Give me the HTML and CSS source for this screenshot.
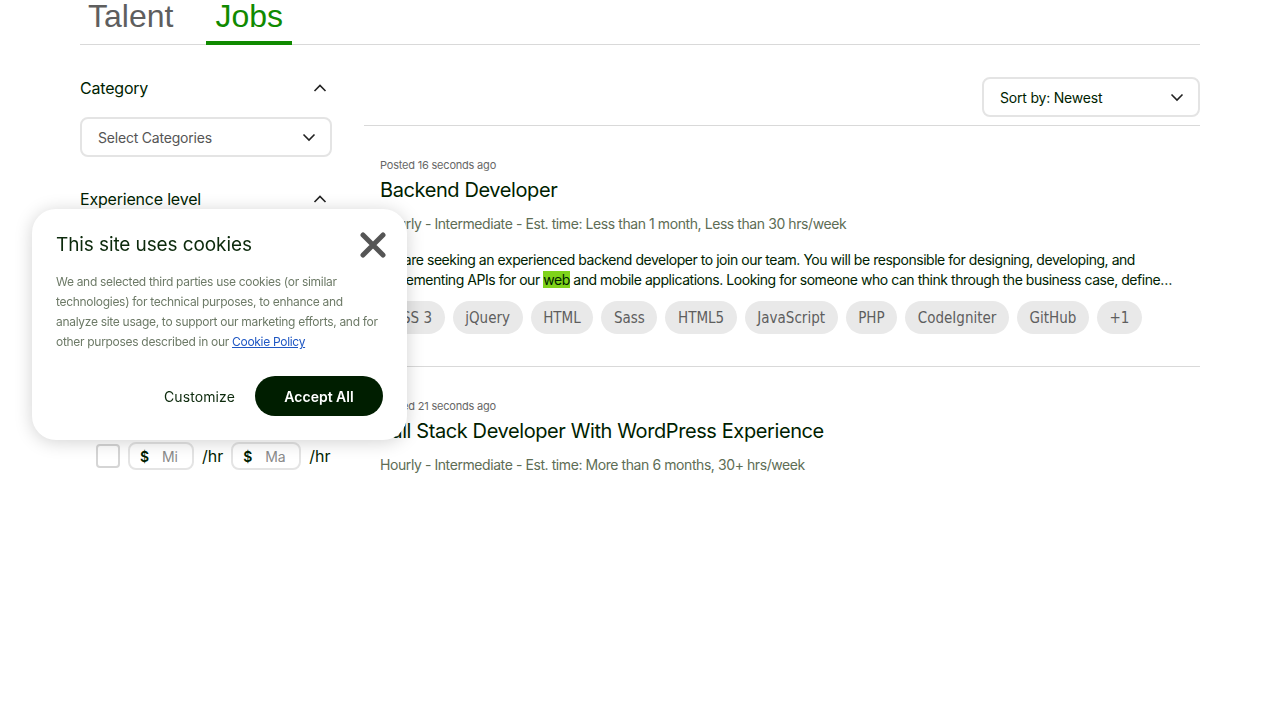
FILE: index.html
```html
<!DOCTYPE html>
<html lang="en">
<head>
<meta charset="utf-8">
<title>Jobs</title>
<link rel="stylesheet" href="styles.css">
</head>
<body>
<div class="page">
  <nav class="tabs">
    <a class="tab">Talent</a>
    <a class="tab active">Jobs</a>
  </nav>
  <div class="content">
    <aside class="sidebar">
      <section class="filter">
        <div class="filter-head">
          <span>Category</span>
          <svg class="chev" width="14" height="14" viewBox="0 0 14 14"><polyline points="1.5,10 7,4.5 12.5,10" fill="none" stroke="#222" stroke-width="1.6"/></svg>
        </div>
        <div class="select">
          <span>Select Categories</span>
          <svg width="14" height="14" viewBox="0 0 14 14"><polyline points="1.5,4.5 7,10 12.5,4.5" fill="none" stroke="#222" stroke-width="1.6"/></svg>
        </div>
      </section>
      <section class="filter">
        <div class="filter-head">
          <span>Experience level</span>
          <svg class="chev" width="14" height="14" viewBox="0 0 14 14"><polyline points="1.5,10 7,4.5 12.5,10" fill="none" stroke="#222" stroke-width="1.6"/></svg>
        </div>
        <div class="options">
          <label class="opt"><span class="box"></span>Entry Level</label>
          <label class="opt"><span class="box"></span>Intermediate</label>
          <label class="opt"><span class="box"></span>Expert</label>
        </div>
      </section>
      <section class="filter">
        <div class="filter-head">
          <span>Job type</span>
          <svg class="chev" width="14" height="14" viewBox="0 0 14 14"><polyline points="1.5,10 7,4.5 12.5,10" fill="none" stroke="#222" stroke-width="1.6"/></svg>
        </div>
        <div class="options">
          <label class="opt"><span class="box"></span>Hourly</label>
        </div>
        <div class="rate">
          <span class="box"></span>
          <div class="rate-input small"><span class="cur">$</span><span class="ph">Mi</span></div>
          <span class="hr">/hr</span>
          <div class="rate-input"><span class="cur">$</span><span class="ph">Ma</span></div>
          <span class="hr">/hr</span>
        </div>
      </section>
    </aside>
    <main class="main">
      <div class="toolbar">
        <div class="sort">
          <span>Sort by: Newest</span>
          <svg width="14" height="14" viewBox="0 0 14 14"><polyline points="1.5,4.5 7,10 12.5,4.5" fill="none" stroke="#222" stroke-width="1.6"/></svg>
        </div>
      </div>
      <article class="job">
        <div class="posted">Posted 16 seconds ago</div>
        <h2 class="title">Backend Developer</h2>
        <div class="meta">Hourly - Intermediate - Est. time: Less than 1 month, Less than 30 hrs/week</div>
        <p class="desc"><span class="line">We are seeking an experienced backend developer to join our team. You will be responsible for designing, developing, and</span><span class="line">implementing APIs for our <mark>web</mark> and mobile applications. Looking for someone who can think through the business case, define…</span></p>
        <div class="tags">
          <span class="tag">CSS 3</span>
          <span class="tag">jQuery</span>
          <span class="tag">HTML</span>
          <span class="tag">Sass</span>
          <span class="tag">HTML5</span>
          <span class="tag">JavaScript</span>
          <span class="tag">PHP</span>
          <span class="tag">CodeIgniter</span>
          <span class="tag">GitHub</span>
          <span class="tag">+1</span>
        </div>
      </article>
      <article class="job">
        <div class="posted">Posted 21 seconds ago</div>
        <h2 class="title">Full Stack Developer With WordPress Experience</h2>
        <div class="meta">Hourly - Intermediate - Est. time: More than 6 months, 30+ hrs/week</div>
      </article>
    </main>
  </div>
</div>

<div class="cookie">
  <div class="cookie-head">
    <h3>This site uses cookies</h3>
    <svg class="close" width="26" height="26" viewBox="0 0 26 26"><path d="M3 3 L23 23 M23 3 L3 23" stroke="#555" stroke-width="5" stroke-linecap="round" fill="none"/></svg>
  </div>
  <p class="cookie-text">We and selected third parties use cookies (or similar technologies) for technical purposes, to enhance and analyze site usage, to support our marketing efforts, and for other purposes described in our <a class="link">Cookie Policy</a></p>
  <div class="cookie-actions">
    <button class="btn-plain">Customize</button>
    <button class="btn-accept">Accept All</button>
  </div>
</div>
</body>
</html>
```
FILE: styles.css
```css
* { box-sizing: border-box; }
html, body { margin: 0; padding: 0; background: #fff; }
body {
  font-family: Inter, "Noto Sans", "Liberation Sans", sans-serif;
  color: #001e00;
  letter-spacing: -0.2px;
}
.page { margin: 0 80px; }

.tabs {
  display: flex;
  border-bottom: 1px solid #d9d9d9;
  height: 45px;
}
.tab {
  position: relative;
  font-family: "Liberation Sans", Arial, sans-serif;
  font-size: 32px;
  line-height: 33px;
  padding: 0 8px 11px;
  color: #5e5e5e;
  letter-spacing: 0;
  margin-right: 25px;
}
.tab.active { color: #108a00; padding: 0 9px 11px; }
.tab.active::after {
  content: "";
  position: absolute;
  left: 0; right: 0; bottom: -1px;
  height: 4px;
  background: #108a00;
}

.content {
  display: flex;
  gap: 32px;
  padding-top: 32px;
}
.sidebar { width: 252px; flex: none; }
.filter { margin-bottom: 31px; }
.filter-head {
  display: flex;
  justify-content: space-between;
  align-items: center;
  height: 22px;
  font-size: 16px;
  color: #001e00;
}
.filter-head .chev { margin-right: 5px; }
.select {
  margin-top: 18px;
  height: 40px;
  border: 2px solid #e4e4e4;
  border-radius: 8px;
  display: flex;
  align-items: center;
  justify-content: space-between;
  padding: 0 14px 0 16px;
  font-size: 14px;
  color: #555;
}
.options { display: flex; flex-direction: column; gap: 16px; margin-top: 16px; }
.opt { display: flex; align-items: center; gap: 12px; font-size: 14px; height: 24px; }
.box {
  width: 24px; height: 24px;
  border: 2px solid #d5d5d5;
  border-radius: 4px;
  flex: none;
  background: #fff;
}
.rate {
  display: flex;
  align-items: center;
  gap: 8px;
  margin-top: 19px;
  padding-left: 16px;
}
.rate-input {
  width: 70px;
  height: 28px;
  border: 2px solid #e4e4e4;
  border-radius: 8px;
  display: flex;
  align-items: center;
  padding-left: 10px;
  font-size: 14px;
}
.rate-input.small { width: 66px; }
.cur { color: #001e00; font-weight: 600; width: 22px; }
.ph { color: #8a8a8a; }
.hr { font-size: 16px; color: #001e00; letter-spacing: 0; }

.main { flex: 1; min-width: 0; }
.toolbar {
  display: flex;
  justify-content: flex-end;
  padding-bottom: 8px;
  border-bottom: 1px solid #d9d9d9;
}
.sort {
  width: 218px;
  height: 40px;
  border: 2px solid #e4e4e4;
  border-radius: 8px;
  display: flex;
  align-items: center;
  justify-content: space-between;
  padding: 0 14px 0 16px;
  font-size: 14px;
  color: #001e00;
}
.job {
  padding: 31px 16px 32px;
  border-bottom: 1px solid #d9d9d9;
}
.job:last-child { border-bottom: none; }
.posted { font-size: 11px; line-height: 16px; color: #676767; }
.title {
  margin: 3px 0 0;
  font-size: 20px;
  line-height: 28px;
  font-weight: 400;
  color: #001e00;
  letter-spacing: -0.4px;
}
.meta { margin-top: 10px; font-size: 14px; line-height: 20px; color: #5e6d55; letter-spacing: -0.42px; }
.desc { margin: 16px 0 0; font-size: 14px; line-height: 20px; color: #001e00; letter-spacing: -0.46px; }
.desc .line { display: block; white-space: nowrap; overflow: hidden; }
mark { background: #7fd31b; color: #001e00; }
.tags { display: flex; gap: 8px; margin-top: 11px; flex-wrap: nowrap; }
.tag {
  height: 33px;
  padding: 0 12.6px;
  border-radius: 17px;
  background: #e9e9e9;
  display: flex;
  align-items: center;
  font-family: "Liberation Sans Narrow", "DejaVu Sans Condensed", "Liberation Sans", sans-serif;
  font-size: 15px;
  letter-spacing: 0;
  color: #5e5e5e;
}

.cookie {
  position: fixed;
  left: 32px;
  top: 209px;
  width: 375px;
  height: 231px;
  background: #fff;
  border-radius: 24px;
  box-shadow: 0 2px 18px rgba(0, 0, 0, 0.18);
  padding: 23px 24px 24px;
}
.cookie-head { display: flex; justify-content: space-between; align-items: center; }
.cookie-head h3 {
  margin: 0;
  font-size: 19px;
  font-weight: 400;
  line-height: 26px;
  color: #0c2a0c;
  letter-spacing: -0.1px;
}
.close { margin-right: -3px; }
.cookie-text {
  margin: 14px 0 0;
  font-size: 12px;
  line-height: 20px;
  color: #6d7a67;
  letter-spacing: -0.3px;
}
.link { color: #1f57c3; text-decoration: underline; }
.cookie-actions {
  display: flex;
  justify-content: flex-end;
  align-items: center;
  gap: 8px;
  margin-top: 24px;
}
.btn-plain, .btn-accept {
  font-family: Inter, "Liberation Sans", sans-serif;
  font-size: 14px;
  border: none;
  height: 40px;
  border-radius: 20px;
  cursor: pointer;
}
.btn-plain { background: transparent; color: #0c2a0c; padding: 0 12px; font-weight: 400; letter-spacing: 0.1px; }
.btn-accept { background: #001e00; color: #fff; width: 128px; font-weight: 600; }
```
